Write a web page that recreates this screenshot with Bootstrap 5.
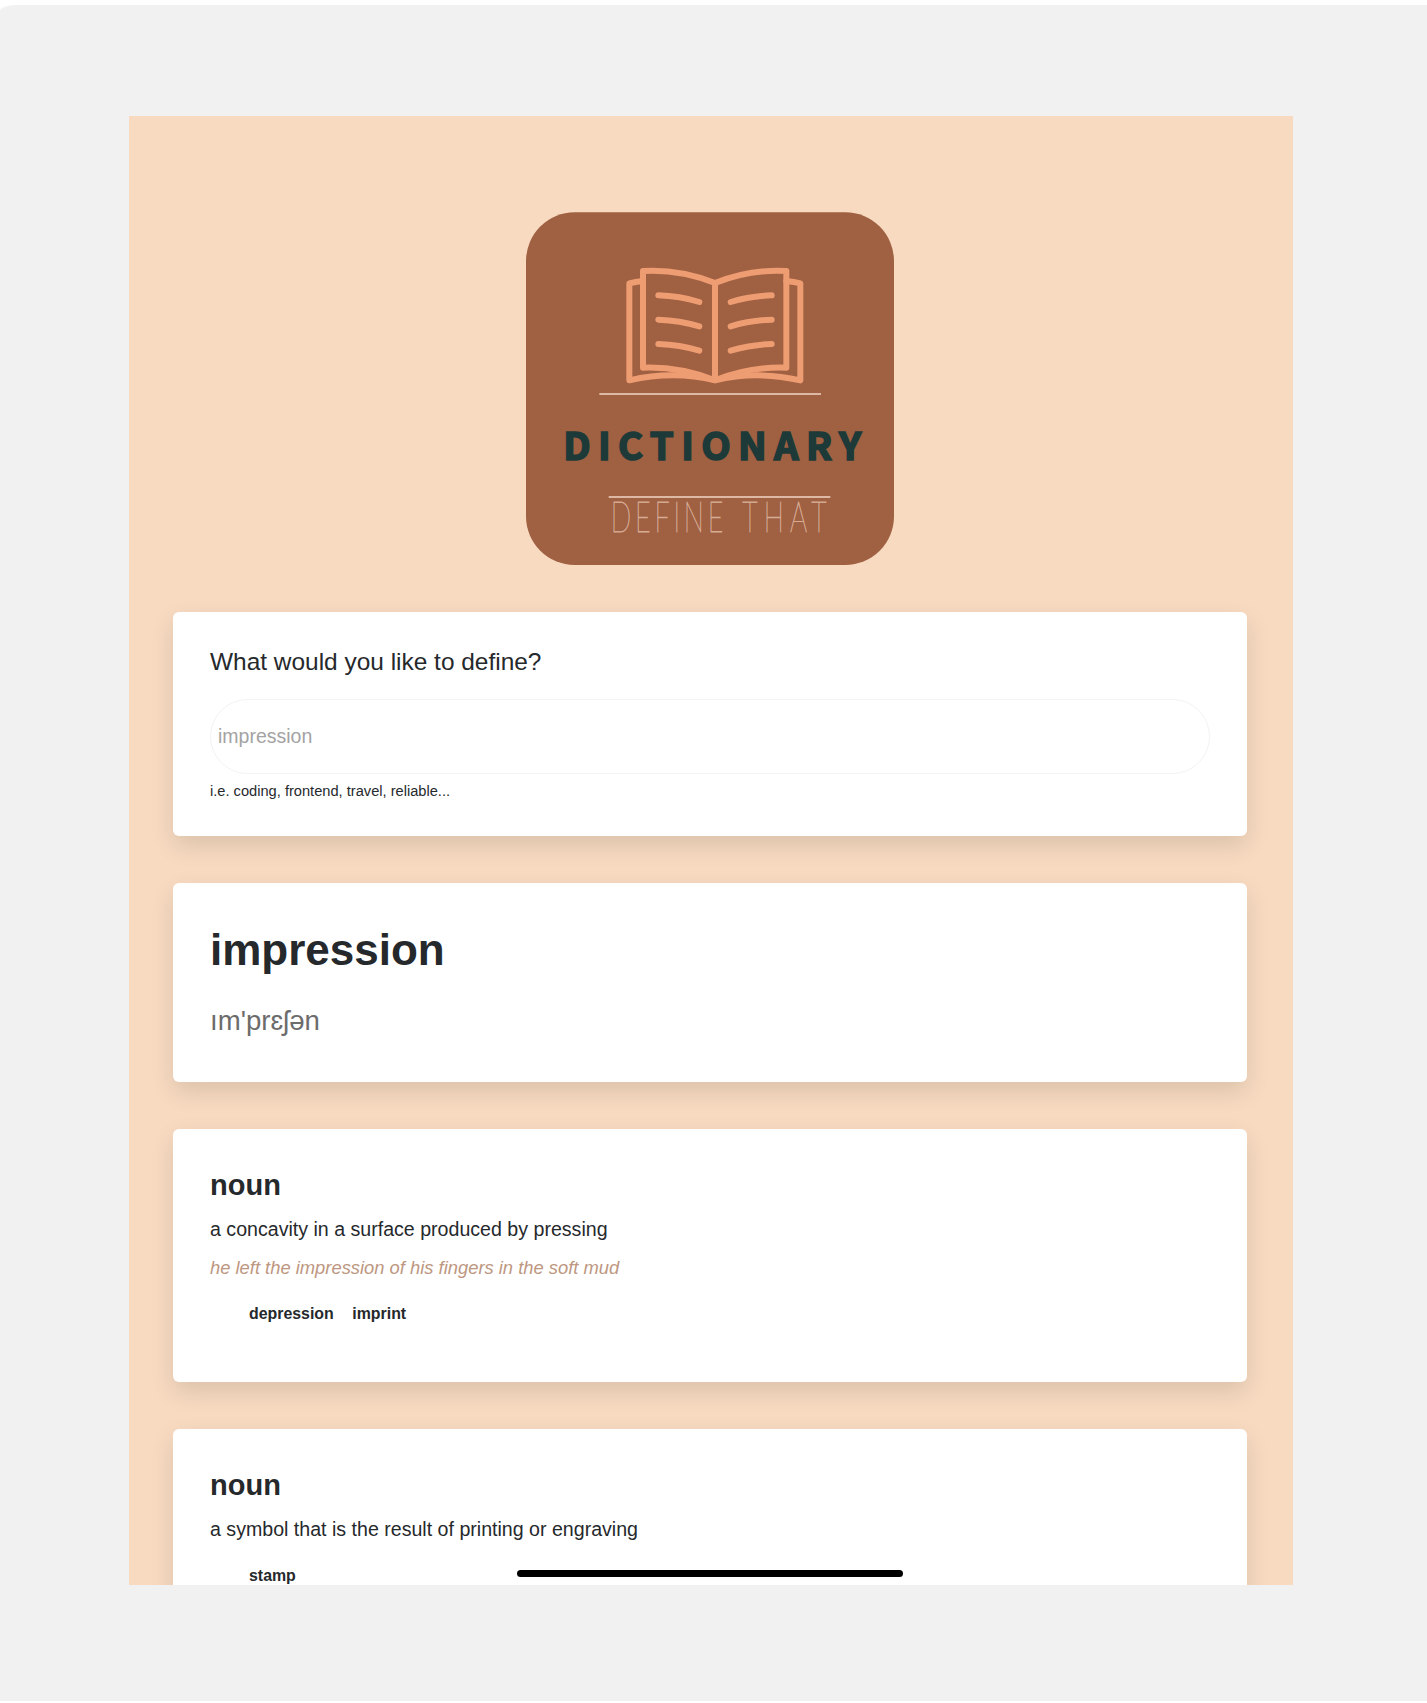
<!DOCTYPE html>
<html lang="en">
<head>
<meta charset="utf-8">
<meta name="viewport" content="width=device-width, initial-scale=1">
<title>Dictionary</title>
<link href="https://cdn.jsdelivr.net/npm/bootstrap@5.3.0/dist/css/bootstrap.min.css" rel="stylesheet">
<style>
html{font-size:19.55px}
body{font-family:"Liberation Sans",Arial,sans-serif;background:#fff;color:#26292c;padding:5px 0 2px;height:1703px;overflow:hidden}
.backdrop{background:#f1f1f1;height:1696px;border-top-left-radius:16px 6px;padding:111px 134px 0 129px}
.screen{background:#f7dac0;height:1469px;padding:96px 46.5px 0 44px}
.brand{display:block;width:368px;height:353px;margin:0 auto 47px}
.panel{background:#fff;border-radius:6px;box-shadow:0 9.8px 25px rgba(0,0,0,.11);padding:0 37px;margin-bottom:47px}
.ask{height:224.4px;padding-top:35px}
.ask h2{font-size:24.45px;line-height:30px;margin-bottom:22px;font-weight:400}
.term{height:75px;border:1.5px solid #f3f3f3;border-radius:38px;font-size:19.5px;padding:0 7px;color:#212529;background:#fff;box-shadow:none}
.term::placeholder{color:#a3a3a3;opacity:1}
.hint{font-size:14.65px;line-height:22px;margin-top:6px}
.word{height:198.5px;padding-top:41px}
.word h1{font-size:44px;line-height:52px;margin-bottom:25px}
.phonetic{font-size:27.6px;line-height:40px;color:#6c6c6c}
.meaning{height:252.7px;padding-top:39px}
.meaning h3{font-size:29px;line-height:35px;margin-bottom:11.6px}
.definition{font-size:19.6px;line-height:30px}
.example{font-size:18.37px;line-height:28px;margin-top:10px;color:#bd9781}
.synonyms{font-size:15.9px;line-height:24px;margin:20px 0 0;padding-left:39px;gap:18.5px}
.home-bar{width:386px;height:7px;border-radius:4px;background:#000;bottom:8px;left:388px}
</style>
</head>
<body>
<div class="backdrop">
<main class="screen position-relative overflow-hidden">
  <svg class="brand" viewBox="48 37 1104 1059" role="img" aria-label="Dictionary, define that">
    <rect x="48" y="38" width="1104" height="1058" rx="146" fill="#a06042"/>
    <g fill="none" stroke="#ee9c72" stroke-width="18" stroke-linecap="round" stroke-linejoin="round">
      <path d="M615 250Q510 208 399 214V504Q510 500 615 542Q720 500 829 504V214Q720 208 615 250V542"/>
      <path d="M399 244Q376 246 358 251V542Q490 512 615 542Q740 512 871 542V251Q853 246 829 244"/>
      <path d="M445 287Q510 289 568 307M445 360Q510 362 568 380M445 433Q510 435 568 453"/>
      <path d="M785 287Q720 289 662 307M785 360Q720 362 662 380M785 433Q720 435 662 453"/>
    </g>
    <path d="M268 583H933M296 892H961" stroke="#dcb8a5" stroke-width="6"/>
    <text x="160" y="780" font-family="'Noto Sans CJK SC',sans-serif" font-weight="700" font-size="115" letter-spacing="22" fill="#1d3a38" stroke="#1d3a38" stroke-width="5">DICTIONARY</text>
    <text transform="translate(302 996) scale(.64 1)" font-family="Lato,sans-serif" font-weight="100" font-size="126" letter-spacing="18" word-spacing="16" fill="#d6ab95" stroke="#d6ab95" stroke-width="2.5">DEFINE <tspan letter-spacing="29">THAT</tspan></text>
  </svg>
  <section class="panel ask">
    <h2>What would you like to define?</h2>
    <input class="form-control term" type="search" placeholder="impression" aria-label="Word">
    <div class="hint">i.e. coding, frontend, travel, reliable...</div>
  </section>
  <section class="panel word">
    <h1 class="fw-bold">impression</h1>
    <div class="phonetic">ım'prɛʃən</div>
  </section>
  <section class="panel meaning">
    <h3 class="fw-bold">noun</h3>
    <div class="definition">a concavity in a surface produced by pressing</div>
    <div class="example fst-italic">he left the impression of his fingers in the soft mud</div>
    <ul class="synonyms list-unstyled d-flex fw-bold"><li>depression</li><li>imprint</li></ul>
  </section>
  <section class="panel meaning">
    <h3 class="fw-bold">noun</h3>
    <div class="definition">a symbol that is the result of printing or engraving</div>
    <ul class="synonyms list-unstyled d-flex fw-bold"><li>stamp</li></ul>
  </section>
  <div class="home-bar position-absolute"></div>
</main>
</div>
<script src="https://cdn.jsdelivr.net/npm/bootstrap@5.3.0/dist/js/bootstrap.bundle.min.js"></script>
</body>
</html>
